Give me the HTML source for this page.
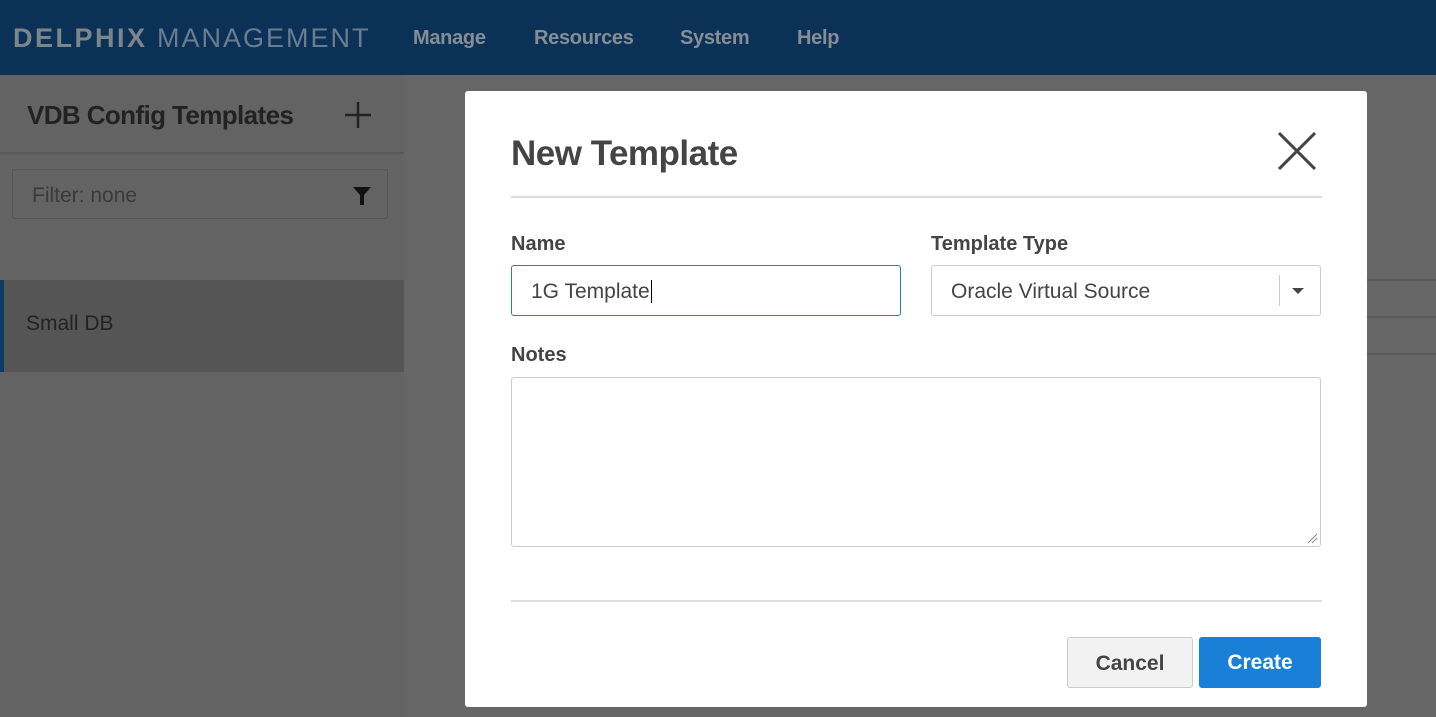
<!DOCTYPE html>
<html><head><style>
*{box-sizing:border-box;margin:0;padding:0}
body{width:1436px;height:717px;overflow:hidden;background:#666;font-family:"Liberation Sans",Arial,sans-serif;position:relative}
.hdr{position:absolute;left:0;top:0;width:1436px;height:75px;background:#0b3256}
.logo{position:absolute;left:13px;top:23px;font-size:27px;color:#6a7d90;letter-spacing:2px;white-space:nowrap}
.logo b{font-weight:bold;color:#7d858c;letter-spacing:2.5px}
.nav{position:absolute;top:27px;font-size:20px;font-weight:bold;color:#858d95;letter-spacing:-0.3px}
.side{position:absolute;left:0;top:75px;width:404px;height:642px;background:#636363}
.side h1{position:absolute;left:27px;top:25px;font-size:26px;color:#222;font-weight:bold;letter-spacing:-0.6px}
.plus{position:absolute;left:345px;top:102px;width:26px;height:26px}
.line{position:absolute;left:0;top:77px;width:404px;height:2px;background:#575757}
.filter{position:absolute;left:12px;top:169px;width:376px;height:50px;border:1px solid #555;border-radius:3px}
.filter span{position:absolute;left:19px;top:14px;font-size:21px;color:#3a3a3a}
.sel{position:absolute;left:0;top:280px;width:404px;height:92px;background:#555;border-left:4px solid #0d3a66}
.sel span{position:absolute;left:22px;top:32px;font-size:21px;color:#222}
.rl{position:absolute;left:1367px;width:69px;height:2px;background:#5a5a5a}
.modal{position:absolute;left:465px;top:91px;width:902px;height:616px;background:#fff;border-radius:3px}
.modal h2{position:absolute;left:46px;top:43px;font-size:35px;color:#444;font-weight:bold;letter-spacing:-0.5px}
.hr{position:absolute;left:46px;width:811px;height:2px;background:#ddd}
.lbl{position:absolute;font-size:20px;font-weight:bold;color:#444}
.inp{position:absolute;height:51px;border:1px solid #ccc;border-radius:3px;font-size:21px;color:#444;padding:14px 19px}
.btn{position:absolute;top:546px;height:51px;border-radius:3px;font-size:21px;font-weight:bold;text-align:center;line-height:51px}
</style></head><body>
<div class="hdr">
<div class="logo"><b>DELPHIX</b> MANAGEMENT</div>
<div class="nav" style="left:413px">Manage</div>
<div class="nav" style="left:534px">Resources</div>
<div class="nav" style="left:680px">System</div>
<div class="nav" style="left:797px">Help</div>
</div>
<div class="side">
<h1>VDB Config Templates</h1>
<div class="line"></div>
</div>
<svg class="plus" viewBox="0 0 26 26"><path d="M13 0V26M0 13H26" stroke="#222" stroke-width="2.5"/></svg>
<div class="filter"><span>Filter: none</span><svg style="position:absolute;left:340px;top:17px" width="18" height="18" viewBox="0 0 18 18"><path d="M0 0H18L11 8V18H7V8Z" fill="#111"/></svg></div>
<div class="sel"><span>Small DB</span></div>
<div class="rl" style="top:279px"></div>
<div class="rl" style="top:316px"></div>
<div class="rl" style="top:353px"></div>
<div class="modal">
<h2>New Template</h2>
<svg style="position:absolute;left:813px;top:41px" width="38" height="38" viewBox="0 0 38 38"><path d="M1 1L37 37M37 1L1 37" stroke="#444" stroke-width="3"/></svg>
<div class="hr" style="top:105px"></div>
<div class="lbl" style="left:46px;top:142px">Name</div>
<div class="lbl" style="left:466px;top:142px">Template Type</div>
<div class="inp" style="left:46px;top:174px;width:390px;border:1.5px solid #2a7bc4">1G Template<span style="border-left:1.5px solid #000;margin-left:1px"></span></div>
<div class="inp" style="left:466px;top:174px;width:390px">Oracle Virtual Source
<div style="position:absolute;left:347px;top:9px;width:1px;height:31px;background:#ccc"></div>
<svg style="position:absolute;left:360px;top:22px" width="12" height="7"><path d="M0 0H12L6 6Z" fill="#444"/></svg></div>
<div class="lbl" style="left:46px;top:253px">Notes</div>
<div class="inp" style="left:46px;top:286px;width:810px;height:170px">
<svg style="position:absolute;right:2px;bottom:2px" width="11" height="11"><path d="M1 10L10 1M5 10L10 5" stroke="#888"/></svg></div>
<div class="hr" style="top:509px"></div>
<div class="btn" style="left:602px;width:126px;background:#f2f2f2;border:1px solid #ccc;color:#444">Cancel</div>
<div class="btn" style="left:734px;width:122px;background:#1a7fd6;color:#fff">Create</div>
</div>
</body></html>
